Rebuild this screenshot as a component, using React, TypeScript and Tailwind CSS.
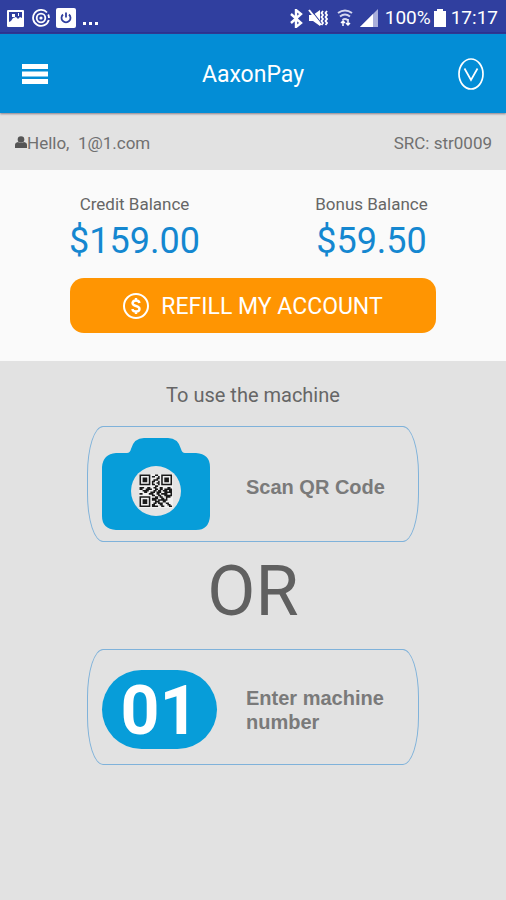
import React from "react";

const QR_ROWS = [
  "111111100011001111111",
  "100000101100101000001",
  "101110100001101011101",
  "101110100111001011101",
  "101110101100101011101",
  "100000101001101000001",
  "111111101100101111111",
  "000000000011000000000",
  "111001100110011000110",
  "110011110011011011111",
  "001111000110110111011",
  "000110011101110011111",
  "110000111001101111001",
  "000000001100110011111",
  "111111100011011001110",
  "100000101111001101000",
  "101110101110111111000",
  "101110100011100110000",
  "101110100110111001100",
  "100000101100011000110",
  "111111101111001100011",
];

const QR_PATH = QR_ROWS.map((row, y) =>
  row
    .split("")
    .map((cell, x) => (cell === "1" ? `M${x} ${y}h1v1h-1z` : ""))
    .join(""),
).join("");

function StatusBar() {
  return (
    <div className="flex h-[34px] items-center justify-between border-b-2 border-[#2a3391] bg-[#303f9f] pt-1 pr-2 pl-[7px] text-white">
      <div className="flex items-center gap-2">
        <svg className="size-[17px]" viewBox="0 0 17 17" aria-hidden="true">
          <rect width="17" height="17" rx="1" fill="#fff" />
          <path d="M2 2h13v6l-2-1-2 2-2-2-3 1-2 3-2 1z" fill="#303f9f" />
          <path d="M5 4h3v3H5z M11 3h1v3h-1z" fill="#fff" />
        </svg>
        <svg className="size-[18px]" viewBox="0 0 18 18" fill="none" stroke="#fff" strokeWidth="1.800" aria-hidden="true">
          <path d="M16.800 11A8 8 0 1 1 15 3.500M16.200 5.500A8 8 0 0 1 17 9" />
          <circle cx="9" cy="9" r="4.300" />
          <circle cx="9" cy="9" r="1.600" fill="#fff" stroke="none" />
        </svg>
        <svg className="-ml-0.5 size-5" viewBox="0 0 20 20" aria-hidden="true">
          <rect width="20" height="20" rx="2" fill="#fff" />
          <path d="M7 6.500a4.500 4.500 0 1 0 6 0M10 4.500v5" fill="none" stroke="#303f9f" strokeWidth="1.800" />
        </svg>
        <svg className="mt-3 -ml-0.5 h-1 w-4" viewBox="0 0 16 4" fill="#fff" aria-hidden="true">
          <path d="M1 0h3v3H1zM7 0h3v3H7zM13 0h3v3h-3z" />
        </svg>
      </div>
      <div className="flex items-center gap-[5px]">
        <svg className="h-[19px] w-[13px]" viewBox="0 0 13 19" fill="none" stroke="#fff" strokeWidth="2.400" aria-hidden="true">
          <path d="M1 5l10 9-5 4V1l5 4-10 9" />
        </svg>
        <svg className="h-[18px] w-5" viewBox="0 0 20 18" aria-hidden="true">
          <path d="M1 6h4l7-5v16l-7-5H1z" fill="#fff" />
          <path d="M3 1l11 14" stroke="#303f9f" strokeWidth="1.200" />
          <path d="M1 1l12 15" stroke="#fff" strokeWidth="2" />
          <path d="M15 2l-1.500 2 1.500 2-1.500 2 1.500 2-1.500 2 1.500 2-1.500 2M19 2l-1.500 2 1.500 2-1.500 2 1.500 2-1.500 2 1.500 2-1.500 2" fill="none" stroke="#fff" strokeWidth="1.800" />
        </svg>
        <svg className="ml-1 h-[18px] w-4" viewBox="0 0 16 18" fill="none" stroke="#d5d8f0" strokeWidth="2" aria-hidden="true">
          <path d="M1 4q7-5 14 0M3 7.500q5-4 10 0M5.500 11q2.500-2 5 0" />
          <path d="M6 17v-5M4 14l2-2 2 2M11 10v6M9 14l2 2 2-2" stroke="#fff" strokeWidth="1.500" />
        </svg>
        <svg className="ml-0.5 h-[18px] w-[18px]" viewBox="0 0 18 18" aria-hidden="true">
          <path d="M0 18L18 0v18z" fill="#a9afdb" />
          <path d="M0 18L13 5v13z" fill="#fff" />
        </svg>
        <span className="ml-0.5 text-[19px] leading-6">100%</span>
        <svg className="-ml-0.5 h-[18px] w-3" viewBox="0 0 12 18" fill="#fff" aria-hidden="true">
          <path d="M3 0h6v2h3v16H0V2h3z" />
        </svg>
        <span className="text-[19px] leading-6">17:17</span>
      </div>
    </div>
  );
}

function Header() {
  return (
    <header className="z-10 grid h-[79px] grid-cols-3 items-center bg-[#038dd6] px-[22px] text-white shadow-[0_1px_2px_#8c7f88]">
      <button type="button" aria-label="Menu" className="w-[26px]">
        <svg className="h-5 w-[26px]" viewBox="0 0 26 20" fill="#fff">
          <path d="M0 0h26v5H0zM0 7.500h26v5H0zM0 15h26v5H0z" />
        </svg>
      </button>
      <h1 className="pt-0.5 text-center text-[23px] leading-7">AaxonPay</h1>
      <button type="button" aria-label="Show more" className="justify-self-end">
        <svg className="h-8 w-[26px]" viewBox="0 0 26 32" fill="none" stroke="#fff" strokeWidth="1.700">
          <ellipse cx="13" cy="16" rx="12" ry="15" />
          <path d="M6.500 10.500L13 22l6.500-11.500" />
        </svg>
      </button>
    </header>
  );
}

function Balance({ label, amount }: { label: string; amount: string }) {
  return (
    <div className="flex flex-col items-center">
      <dt className="text-[17px] leading-6 text-[#666]">{label}</dt>
      <dd className="text-[36px] leading-[50px] text-[#1487d0]">{amount}</dd>
    </div>
  );
}

function OptionCard({ picture, children }: { picture: React.ReactNode; children: React.ReactNode }) {
  return (
    <button
      type="button"
      className="flex h-[116px] w-full items-center rounded-[16px/48px] border border-[#7fb2da] pl-3.5 text-left font-['Liberation_Sans',sans-serif] text-[20px] leading-6 font-bold text-[#7a7a7a]"
    >
      <span className="w-[144px] shrink-0">{picture}</span>
      <span className="w-[150px] pt-1.5">{children}</span>
    </button>
  );
}

function CameraPicture() {
  return (
    <svg className="h-[92px] w-[108px]" viewBox="0 0 108 92" aria-hidden="true">
      <path
        d="M14 15H25Q28 15 29 11Q32 0 42 0H66Q76 0 79 11Q80 15 83 15H94Q108 16 108 29V78Q107 92 94 92H14Q0 91 0 78V29Q1 16 14 15Z"
        fill="#079dd9"
      />
      <circle cx="54" cy="53" r="25" fill="#e4e4e4" />
      <rect x="37" y="36" width="34" height="34" fill="#f1f1f1" />
      <path d={QR_PATH} transform="translate(37.500 36.500) scale(1.550)" fill="#1a1a1a" />
    </svg>
  );
}

export default function App() {
  return (
    <div className="flex min-h-screen flex-col bg-[#e2e2e2] font-[Roboto,sans-serif]">
      <StatusBar />
      <Header />
      <div className="flex h-[57px] items-center justify-between pr-3.5 pl-[15px] pt-0.5 text-[17px] leading-6 text-[#707070]">
        <span className="flex items-center">
          <svg className="h-[13px] w-3" viewBox="0 0 12 13" fill="#555" aria-hidden="true">
            <circle cx="6" cy="3.500" r="3.300" />
            <path d="M0 12V9q0-2.500 3-3 3 2 6 0 3 .5 3 3v3z" />
          </svg>
          <span className="whitespace-pre">Hello,  1@1.com</span>
        </span>
        <span>SRC: str0009</span>
      </div>
      <section className="flex flex-col bg-[#fafafa] px-[70px] pt-[22px] pb-7">
        <dl className="-mx-[54px] grid grid-cols-2">
          <Balance label="Credit Balance" amount="$159.00" />
          <Balance label="Bonus Balance" amount="$59.50" />
        </dl>
        <button
          type="button"
          className="mt-3 flex h-[55px] items-center justify-center gap-3 rounded-[14px] bg-[#ff9502] text-[23px] leading-8 text-white"
        >
          <svg className="size-[26px]" viewBox="0 0 26 26" fill="none" stroke="#fff" aria-hidden="true">
            <circle cx="13" cy="13" r="12" strokeWidth="2" />
            <path d="M16.500 10Q16 7.500 13 7.500T9.500 10q0 2 3.500 3t3.500 3q0 2.500-3.500 2.500T9.500 16M13 5v3M13 18v3" strokeWidth="2.400" />
          </svg>
          <span className="pt-0.5">REFILL MY ACCOUNT</span>
        </button>
      </section>
      <main className="flex flex-col items-center px-[87px] pt-5 pb-8 text-[#666]">
        <p className="text-[20px] leading-7">To use the machine</p>
        <div className="mt-[17px] w-full">
          <OptionCard picture={<CameraPicture />}>Scan QR Code</OptionCard>
        </div>
        <p className="mt-2 mb-4 text-[70px] leading-[83px] text-[#606060]">OR</p>
        <OptionCard
          picture={
            <span className="mt-1 flex h-[79px] w-[115px] items-center justify-center rounded-[40px] bg-[#079dd9] pt-1 font-[Roboto,sans-serif] text-[68px] leading-[75px] text-white">
              01
            </span>
          }
        >
          Enter machine number
        </OptionCard>
      </main>
    </div>
  );
}
